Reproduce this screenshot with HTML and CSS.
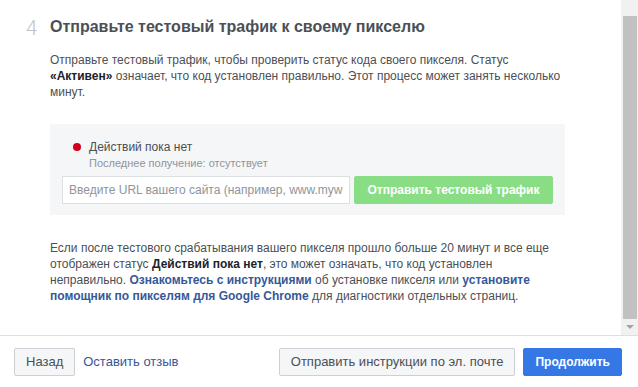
FILE: index.html
```html
<!DOCTYPE html>
<html lang="ru">
<head>
  <meta charset="UTF-8" />
  <meta name="viewport" content="width=device-width, initial-scale=1.0"/>
  <title>Установка пикселя</title>
  <link rel="stylesheet" href="styles.css">
</head>
<body>
  <div class="dialog">
    <div class="scroll-area">
      <div class="content">
        <div class="step">
          <div class="step-num">4</div>
          <div class="step-body">
            <h2 class="step-title">Отправьте тестовый трафик к своему пикселю</h2>
            <p class="step-text">Отправьте тестовый трафик, чтобы проверить статус кода своего пикселя. Статус <b>«Активен»</b> означает, что код установлен правильно. Этот процесс может занять несколько минут.</p>

            <div class="test-box">
              <div class="status">
                <span class="status-dot"></span>
                <span class="status-label">Действий пока нет</span>
              </div>
              <div class="status-sub">Последнее получение: отсутствует</div>
              <div class="test-form">
                <input class="url-input" type="text" placeholder="Введите URL вашего сайта (например, www.mywebsite.com)">
                <button class="btn btn-green" disabled>Отправить тестовый трафик</button>
              </div>
            </div>

            <p class="step-text step-note">Если после тестового срабатывания вашего пикселя прошло больше 20 минут и все еще отображен статус <b>Действий пока нет</b>, это может означать, что код установлен неправильно. <a href="#" class="link-bold">Ознакомьтесь с инструкциями</a> об установке пикселя или <a href="#" class="link-bold">установите помощник по пикселям для Google Chrome</a> для диагностики отдельных страниц.</p>
          </div>
        </div>
      </div>
      <div class="scrollbar">
        <div class="sb-arrow"></div>
        <div class="sb-thumb"></div>
        <div class="sb-arrow"><span class="sb-down"></span></div>
      </div>
    </div>

    <div class="footer">
      <button class="btn btn-gray">Назад</button>
      <a href="#" class="footer-link">Оставить отзыв</a>
      <div class="spacer"></div>
      <button class="btn btn-gray">Отправить инструкции по эл. почте</button>
      <button class="btn btn-blue">Продолжить</button>
    </div>
  </div>
</body>
</html>
```

FILE: styles.css
```css
* {
  box-sizing: border-box;
}

body {
  margin: 0;
  font-family: "Liberation Sans", Arial, sans-serif;
  background-color: #fff;
  color: #4b4f56;
  width: 638px;
  height: 387px;
  overflow: hidden;
}

.dialog {
  display: flex;
  flex-direction: column;
  height: 387px;
}

.scroll-area {
  display: flex;
  height: 336px;
  border-bottom: 1px solid #dddfe2;
}

.content {
  flex: 1;
  padding: 17px 56px 0 26px;
}

.step {
  display: flex;
}

.step-num {
  width: 24px;
  padding-top: 1px;
  font-family: Roboto, "Liberation Sans", sans-serif;
  font-size: 20px;
  line-height: 20px;
  font-weight: 300;
  color: #bec2c9;
}

.step-body {
  flex: 1;
}

.step-title {
  margin: 0;
  font-size: 16px;
  line-height: 20px;
  font-weight: bold;
  color: #4b4f56;
}

.step-text {
  margin: 15px 0 0;
  font-size: 12px;
  line-height: 16px;
  color: #4b4f56;
}

.step-note {
  margin-top: 25px;
}

.step-text b {
  color: #1d2129;
}

.link-bold {
  color: #365899;
  font-weight: bold;
  text-decoration: none;
}

.test-box {
  margin-top: 24px;
  background-color: #f5f6f7;
  padding: 15px 12px 11px;
}

.status {
  display: flex;
  align-items: center;
  padding-left: 11px;
  font-size: 12px;
  line-height: 16px;
  color: #4b4f56;
}

.status-dot {
  width: 8px;
  height: 8px;
  border-radius: 50%;
  background-color: #d0021b;
  margin-right: 8px;
}

.status-sub {
  padding-left: 27px;
  font-size: 11px;
  line-height: 16px;
  color: #90949c;
}

.test-form {
  display: flex;
  gap: 4px;
  margin-top: 5px;
}

.url-input {
  width: 288px;
  height: 28px;
  border: 1px solid #dddfe2;
  background: #fff;
  padding: 0 6px;
  font-family: inherit;
  font-size: 12px;
  color: #1d2129;
  outline: none;
}

.url-input::placeholder {
  color: #90949c;
}

.btn {
  height: 28px;
  border-radius: 2px;
  font-family: inherit;
  font-size: 12px;
  padding: 0 12px;
  cursor: pointer;
}

.btn-green {
  flex: 1;
  border: 1px solid #89de85;
  background-color: #89de85;
  color: #fff;
  font-weight: bold;
}

.btn-gray {
  border: 1px solid #ccd0d5;
  background-color: #f5f6f7;
  color: #4b4f56;
  font-size: 13px;
  padding: 0 11px;
}

.btn-blue {
  border: 1px solid #3578e5;
  background-color: #3578e5;
  color: #fff;
  font-weight: bold;
  padding: 0 11px;
}

.scrollbar {
  width: 17px;
  background-color: #f1f1f1;
  display: flex;
  flex-direction: column;
  padding: 0 1px 0 2px;
}

.sb-arrow {
  height: 16px;
  display: flex;
  align-items: center;
  justify-content: center;
}

.sb-thumb {
  flex: 1;
  background-color: #c1c1c1;
}

.sb-down {
  width: 0;
  height: 0;
  border-left: 4px solid transparent;
  border-right: 4px solid transparent;
  border-top: 4px solid #a3a3a3;
}

.footer {
  flex: 1;
  display: flex;
  align-items: center;
  gap: 8px;
  padding: 0 16px 0 14px;
}

.footer-link {
  color: #365899;
  font-size: 13px;
  text-decoration: none;
}

.spacer {
  flex: 1;
}
```
